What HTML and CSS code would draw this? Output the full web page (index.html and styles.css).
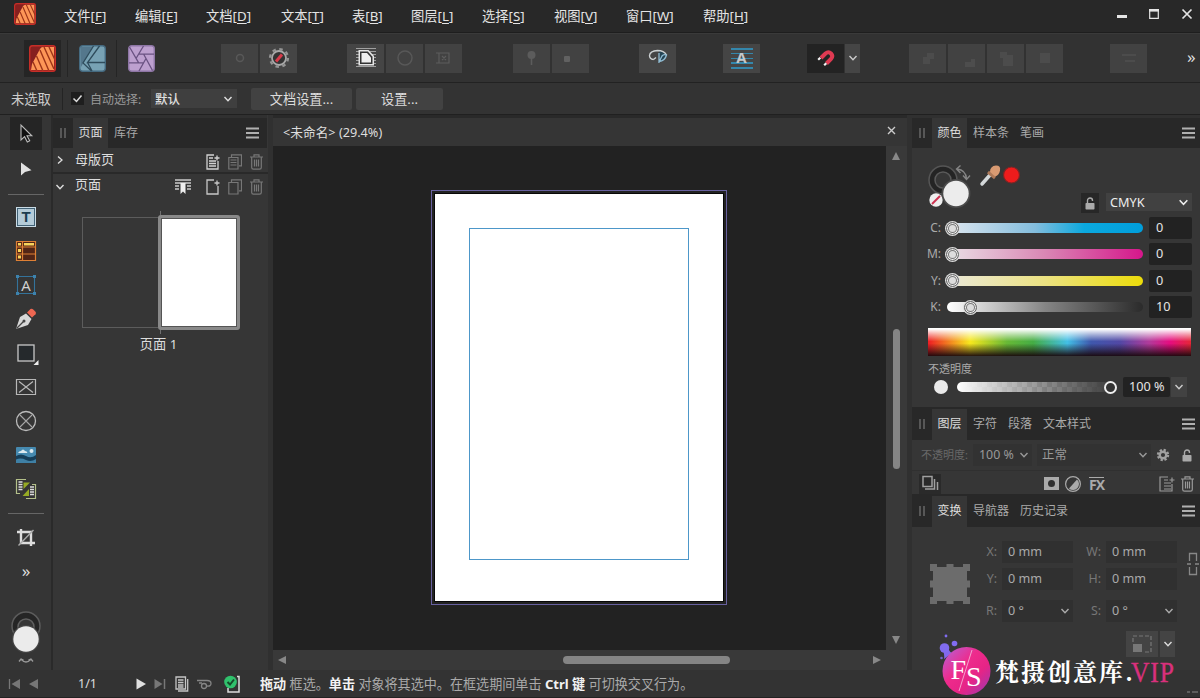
FILE: index.html
```html
<!DOCTYPE html>
<html lang="zh-CN">
<head>
    <meta charset="UTF-8">
    <title>未命名</title>
    <link rel="stylesheet" href="styles.css">
</head>
<body>

<svg class="defs">
    <symbol id="chev" viewBox="0 0 10 8"><path d="M1.5 2 5 5.7 8.5 2" fill="none" stroke="currentColor" stroke-width="1.4"/></symbol>
    <symbol id="menu" viewBox="0 0 13 12"><path d="M0 1.5h13M0 6h13M0 10.5h13" stroke="#b0b0b0" stroke-width="2"/></symbol>
    <symbol id="grip" viewBox="0 0 6 10"><path d="M1 0v10M5 0v10" stroke="#777" stroke-width="1.2"/></symbol>
    <symbol id="trash" viewBox="0 0 13 16"><path d="M0 3h13M4 3V.8h5V3M1.700 3v10.500q0 1.700 1.700 1.700h6.200q1.700 0 1.700-1.700V3M4.500 5.500v7M6.500 5.500v7M8.500 5.500v7" fill="none" stroke="currentColor" stroke-width="1.2"/></symbol>
    <symbol id="lock" viewBox="0 0 10 13"><path d="M2.500 6V3.500a2.500 2.500 0 0 1 5 0V4" fill="none" stroke="currentColor" stroke-width="1.400"/><rect x=".5" y="6" width="9" height="6.500" rx=".7" fill="currentColor"/></symbol>
    <symbol id="pub" viewBox="0 0 27 27">
        <rect width="27" height="27" rx="3" fill="#86201f"/>
        <path d="M2 25 3 19 11 4Q12 2 14 2h11v23z" fill="#fd9657"/>
        <path d="M4 17l4 9M7.500 11l6.500 15M11 5l9 21M15 2l10 22M20 2l6 13" stroke="#9c3418" stroke-width="1.400"/>
        <rect x=".7" y=".7" width="25.600" height="25.600" rx="3" fill="none" stroke="#c52e28" stroke-width="1.400"/>
    </symbol>
</svg>

<header class="titlebar">
    <svg class="app-icon" width="22" height="22"><use href="#pub"/></svg>
    <nav class="menus">
        <span>文件[<u>F</u>]</span>
        <span>编辑[<u>E</u>]</span>
        <span>文档[<u>D</u>]</span>
        <span>文本[<u>T</u>]</span>
        <span>表[<u>B</u>]</span>
        <span>图层[<u>L</u>]</span>
        <span>选择[<u>S</u>]</span>
        <span>视图[<u>V</u>]</span>
        <span>窗口[<u>W</u>]</span>
        <span>帮助[<u>H</u>]</span>
    </nav>
    <svg class="win-buttons" width="77" height="14" viewBox="0 0 77 14">
        <path d="M1 8.500h10" stroke="#e4e4e4" stroke-width="3"/>
        <path d="M33.700 2v8.300h8.600V2" fill="none" stroke="#e4e4e4" stroke-width="1.200"/>
        <path d="M33 2.300h10" stroke="#e4e4e4" stroke-width="2.600"/>
        <path d="M66.500 1.500l9 9M75.500 1.500l-9 9" stroke="#e4e4e4" stroke-width="1.700"/>
    </svg>
</header>

<div class="toolbar">
    <div class="personas">
        <div class="persona active"><svg width="27" height="27"><use href="#pub"/></svg></div>
        <div class="persona">
            <svg width="27" height="27" viewBox="0 0 27 27">
                <rect x=".7" y=".7" width="25.600" height="25.600" rx="3" fill="#78a2b4" stroke="#456a80" stroke-width="1.400"/>
                <path d="M1.500 2h12L2 22z" fill="#54778c"/>
                <path d="M14.500 1 4 18l8.500 8M20.500 1 8.500 17.500H26M8.500 17.500l4.500 8.500" fill="none" stroke="#2f4c5c" stroke-width="1.300"/>
            </svg>
        </div>
        <div class="persona">
            <svg width="27" height="27" viewBox="0 0 27 27">
                <rect x=".7" y=".7" width="25.600" height="25.600" rx="3" fill="#bda0cf" stroke="#8e76a5" stroke-width="1.400"/>
                <path d="M15.700 9.200 24.500 25.500M18 13.500 11 26M15.700 17.800H1M10.700 17.800 1.500 2M8 13.500 15.500 1M10.700 9.200H26" fill="none" stroke="#6a5282" stroke-width="1.300"/>
            </svg>
        </div>
    </div>

    <div class="group g-prefs">
        <div class="btn dim"><svg width="22" height="22" viewBox="0 0 22 22"><circle cx="11" cy="11" r="3.500" fill="none" stroke="#585858" stroke-width="1.500"/></svg></div>
        <div class="btn"><svg width="22" height="22" viewBox="0 0 22 22"><circle cx="11" cy="11" r="9" fill="none" stroke="#949494" stroke-width="2.200" stroke-dasharray="3.500 3.568"/><circle cx="11" cy="11" r="7" fill="#333" stroke="#a8a8a8" stroke-width="1.800"/><path d="M8 14.500l6-7" stroke="#d83a4a" stroke-width="3"/></svg></div>
    </div>

    <div class="group g-wrap">
        <div class="btn"><svg width="22" height="22" viewBox="0 0 22 22"><path d="M1 1.500h20M1 4.500h20M1 7.500h20M1 10.500h20M1 13.500h20M1 16.500h20M1 19.500h20" stroke="#a0a0a0"/><path d="M3.500 3h10l5.500 6v9.500H3.500z" fill="#e6e6e6"/><path d="M5 4.500h7.800l4.700 5.300V17H5z" fill="#333"/><path d="M6.500 6h5.500l4 4.500v5H6.500z" fill="#eee"/></svg></div>
        <div class="btn dim"><svg width="22" height="22" viewBox="0 0 22 22"><circle cx="11" cy="11" r="7" fill="none" stroke="#585858" stroke-width="1.500"/></svg></div>
        <div class="btn dim"><svg width="22" height="22" viewBox="0 0 22 22"><path d="M6 6h10v10H6zM3 6h3M3 16h3M9 9l4 4M13 9l-4 4" fill="none" stroke="#5c5c5c" stroke-width="1.200"/></svg></div>
    </div>

    <div class="group g-pin">
        <div class="btn dim"><svg width="22" height="22" viewBox="0 0 22 22"><circle cx="10.500" cy="8" r="4" fill="#5c5c5c"/><path d="M10.500 11v7" stroke="#5c5c5c" stroke-width="1.600"/></svg></div>
        <div class="btn dim"><svg width="22" height="22" viewBox="0 0 22 22"><rect x="4" y="9" width="6" height="6" rx="1" fill="#616161"/></svg></div>
    </div>

    <div class="group g-view">
        <div class="btn"><svg width="22" height="22" viewBox="0 0 22 22"><path d="M12 4q5.500 0 7 4-1 4-5.500 6.500z" fill="#244454"/><path d="M6.500 12.500Q2.500 12 2.500 8.500 3 4 10.500 3.500 17 3.500 19.500 8M6.500 12.500l2.500-2" fill="none" stroke="#cbd0d2" stroke-width="1.400"/><path d="M12 6v10M12 14.500q6-.5 7.500-6.500-3-1-4.500 1l-2.500 5" fill="none" stroke="#91bdd4" stroke-width="1.300"/></svg></div>
    </div>

    <div class="group g-baseline">
        <div class="btn">
            <div class="baseline-icon">A</div>
        </div>
    </div>

    <div class="group g-snap">
        <div class="btn on"><svg width="22" height="22" viewBox="0 0 22 22"><path d="M6 11l4.500-4.500q3-2.500 5.500 0t0 5.500L11.500 16.500" fill="none" stroke="#df3a52" stroke-width="4"/><path d="M5 12.500l-1.500-1.500M11 18l-1.500-1.500" stroke="#f2f2f2" stroke-width="3"/></svg></div>
        <div class="btn drop"><svg width="10" height="8"><use href="#chev"/></svg></div>
    </div>

    <div class="group g-bool">
        <div class="btn dim"><svg width="22" height="22" viewBox="0 0 22 22"><path d="M6 10h4V6h7v6h-4v5H6z" fill="#4c4c4c"/></svg></div>
        <div class="btn dim"><svg width="22" height="22" viewBox="0 0 22 22"><path d="M19 12v8H9v-5h6v-3z" fill="#4d4d4d"/></svg></div>
        <div class="btn dim"><svg width="22" height="22" viewBox="0 0 22 22"><path d="M5 5h7v3h6v11H8v-8H5z" fill="#4c4c4c"/></svg></div>
        <div class="btn dim"><svg width="22" height="22" viewBox="0 0 22 22"><path d="M6 6h10v10H6z" fill="#4c4c4c"/></svg></div>
    </div>

    <div class="group g-align">
        <div class="btn dim"><svg width="22" height="22" viewBox="0 0 22 22"><path d="M4 8h14M7 14h10" stroke="#4c4c4c" stroke-width="2"/></svg></div>
    </div>
    <span class="more">»</span>
</div>

<div class="contextbar">
    <span class="no-selection">未选取</span>
    <svg class="check" width="13" height="13" viewBox="0 0 13 13"><path d="M2.500 6.500l3 3 5-6" fill="none" stroke="#ddd" stroke-width="1.500"/></svg>
    <span class="auto-label">自动选择:</span>
    <div class="auto-select"><b>默认</b><svg width="10" height="8"><use href="#chev"/></svg></div>
    <div class="ctx-btn doc-setup">文档设置...</div>
    <div class="ctx-btn prefs">设置...</div>
</div>

<main class="workspace">
    <aside class="tools">
        <div class="tool selected"><svg width="22" height="22" viewBox="0 0 22 22"><path d="M6 2v15l3.600-3.300L12.300 19l2.400-1.200L12 12.800h4.800z" fill="#111" stroke="#bbb" stroke-width="1.100"/></svg></div>
        <div class="tool"><svg width="22" height="22" viewBox="0 0 22 22"><path d="M6 3.500v13l4-3.500 6.500-1.800z" fill="#e2e2e2"/></svg></div>
        <hr>
        <div class="tool"><div class="frame-text">T</div></div>
        <div class="tool"><svg width="22" height="22" viewBox="0 0 22 22"><path d="M1.500 1.500h19v19h-19zM7.500 1v20M1 7h20M1 14h20" fill="#512516" stroke="#de8035" stroke-width="1.200"/><path d="M3 3h3v2.500H3zM9 3h10v2.500H9zM3 9h3v3H3zM3 15.500h3v3H3z" fill="#f7d45c"/></svg></div>
        <div class="tool"><svg width="22" height="22" viewBox="0 0 22 22"><path d="M2.500 2.500h17v17h-17z" fill="none" stroke="#34739b" stroke-width="1.100"/><path d="M1 1h3v3H1zM18 1h3v3h-3zM1 18h3v3H1zM18 18h3v3h-3z" fill="#3d83ae"/><text class="art-a" x="11" y="16.500">A</text></svg></div>
        <div class="tool"><svg width="22" height="22" viewBox="0 0 22 22"><path d="M1 21 5 9l6-3.500 5.500 5.500L13 17z" fill="#d8d8d8"/><path d="M1.500 20.500l7-7" stroke="#444" stroke-width="1.200"/><circle cx="9" cy="13" r="1.500" fill="#444"/><path d="M12 4.500 15.500 1q1.500-.8 3 .7l2 2q1 1.200 0 2.500L17 9.500z" fill="#ee6752"/></svg></div>
        <div class="tool"><svg width="26" height="26" viewBox="0 0 26 26"><rect x="5" y="5" width="16" height="16" fill="#25292c" stroke="#c8c8c8" stroke-width="1.300"/><path d="M25.500 20v5h-5z" fill="#eee"/></svg></div>
        <div class="tool"><svg width="22" height="22" viewBox="0 0 22 22"><path d="M1.500 3.500h19v15h-19zM4 5.500l14 11M18 5.500l-14 11" fill="none" stroke="#b8b8b8" stroke-width="1.200"/></svg></div>
        <div class="tool"><svg width="22" height="22" viewBox="0 0 22 22"><circle cx="11" cy="11" r="9.500" fill="none" stroke="#bbb" stroke-width="1.300"/><path d="M5 5l12 12M17 5 5 17" stroke="#a5a5a5" stroke-width="1.100"/></svg></div>
        <div class="tool"><svg width="22" height="22" viewBox="0 0 22 22"><rect x="1" y="3" width="20" height="16" rx="1" fill="#468ab0"/><path d="M1 12q5-3 10 0t10-1v8H1z" fill="#163e59"/><path d="M1 15.500q5-2 10 .5t10-1v4H1z" fill="#3f80a5"/><path d="M3 9q1-2 3-2 2-3 4 0 2 0 2.500 2z" fill="#dce9ef"/><circle cx="16.500" cy="7" r="2" fill="#dce9ef"/></svg></div>
        <div class="tool"><svg width="22" height="22" viewBox="0 0 22 22"><path d="M11 1.500H1.500v14H5M11 20.500h9.500v-14H17" fill="none" stroke="#b4c08a" stroke-width="1.200"/><path d="M3.500 4h4M3.500 6.500h4M3.500 9h4M3.500 11.500h4M15 9h4M15 11.500h4M15 14h4M15 16.500h4" stroke="#ddd" stroke-width="1.300"/><path d="M8.500 4.500H15L8.500 11zM14 18H7.500L14 11z" fill="#96aa24"/></svg></div>
        <hr>
        <div class="tool crop"><svg width="22" height="22" viewBox="0 0 22 22"><path d="M6 2v14h14M2 5h14v14" fill="none" stroke="#ddd" stroke-width="2.400"/><path d="M3.500 18.500 18.500 3" stroke="#aaa" stroke-width="1.400"/></svg></div>
        <div class="tool more-tools">»</div>
        <svg class="wells" width="34" height="56" viewBox="0 0 34 56">
            <circle cx="17" cy="16" r="14" fill="#252525" stroke="#5c5c5c" stroke-width="1.500"/>
            <circle cx="17" cy="17" r="8" fill="#363636" stroke="#606060" stroke-width="1.500"/>
            <circle cx="17" cy="29" r="14" fill="#444"/>
            <circle cx="17" cy="29" r="12.700" fill="#ebebeb"/>
            <path d="M12 49q5 6 10 0M10 51.500l2-2.500 2.500 1M19.500 50l2.500-1 2 2.500" fill="none" stroke="#999" stroke-width="1.300"/>
        </svg>
    </aside>

    <section class="pages-panel">
        <div class="tabs">
            <svg class="grip" width="6" height="10"><use href="#grip"/></svg>
            <span class="tab active">页面</span>
            <span class="tab">库存</span>
            <svg class="burger" width="13" height="12"><use href="#menu"/></svg>
        </div>
        <div class="page-row masters">
            <svg class="arrow" width="8" height="10" viewBox="0 0 8 10"><path d="M2 1.500 6 5 2 8.500" fill="none" stroke="#ddd" stroke-width="1.300"/></svg>
            <span>母版页</span>
            <div class="row-icons">
                <svg width="14" height="16" viewBox="0 0 14 16"><path d="M8 1H1v14h11V7M3 4h4M3 7h7M3 9.500h7M3 12h7M8.500 4h5M11 1.500v5" fill="none" stroke="#d2d2d2" stroke-width="1.300"/></svg>
                <svg class="off" width="14" height="16" viewBox="0 0 14 16"><path d="M3.500 3V.8h10v11H11M.8 3.500H10V15H.8zM2.500 6h6M2.500 8.500h6M2.500 11h6" fill="none" stroke="currentColor" stroke-width="1.200"/></svg>
                <svg class="off" width="13" height="16"><use href="#trash"/></svg>
            </div>
        </div>
        <div class="page-row pages">
            <svg class="arrow" width="10" height="8"><use href="#chev"/></svg>
            <span>页面</span>
            <svg class="section-icon" width="16" height="15" viewBox="0 0 16 15"><path d="M0 1h16M0 4h16M0 7h4M12 7h4M0 10h4M12 10h4" stroke="#ccc" stroke-width="1.400"/><path d="M5.500 4h5v11L8 12.500 5.500 15z" fill="#eee"/></svg>
            <div class="row-icons">
                <svg width="14" height="16" viewBox="0 0 14 16"><path d="M8 1H1v14h11V7M8.500 4h5M11 1.500v5" fill="none" stroke="#c8c8c8" stroke-width="1.300"/></svg>
                <svg class="off" width="14" height="16" viewBox="0 0 14 16"><path d="M3.500 3V.8h10v11H11M.8 3.500H10V15H.8z" fill="none" stroke="currentColor" stroke-width="1.200"/></svg>
                <svg class="off" width="13" height="16"><use href="#trash"/></svg>
            </div>
        </div>
        <div class="spread">
            <div class="page-empty"></div>
            <div class="page-thumb"></div>
        </div>
        <div class="page-label">页面 1</div>
    </section>

    <section class="document">
        <div class="doc-tab">
            <span>&lt;未命名&gt; (29.4%)</span>
            <svg width="9" height="9" viewBox="0 0 9 9"><path d="M1 1l7 7M8 1 1 8" stroke="#ccc" stroke-width="1.400"/></svg>
        </div>
        <div class="canvas">
            <div class="bleed"><div class="page"><div class="margins"></div></div></div>
        </div>
        <div class="vscroll">
            <svg width="10" height="8" viewBox="0 0 10 8"><path d="M5 0l4 8H1z" fill="#888"/></svg>
            <div class="thumb"></div>
            <svg width="10" height="8" viewBox="0 0 10 8"><path d="M5 8l4-8H1z" fill="#888"/></svg>
        </div>
        <div class="hscroll">
            <svg width="8" height="8" viewBox="0 0 8 8"><path d="M0 4l8-4v8z" fill="#888"/></svg>
            <div class="thumb"></div>
            <svg width="8" height="8" viewBox="0 0 8 8"><path d="M8 4 0 0v8z" fill="#888"/></svg>
        </div>
    </section>

    <aside class="studio">
        <div class="tabs">
            <svg class="grip" width="6" height="10"><use href="#grip"/></svg>
            <span class="tab active">颜色</span>
            <span class="tab">样本条</span>
            <span class="tab">笔画</span>
            <svg class="burger" width="13" height="12"><use href="#menu"/></svg>
        </div>
        <div class="color-panel">
            <div class="color-top">
                <svg width="94" height="52" viewBox="1 -1 94 52">
                    <circle cx="16" cy="20" r="11" fill="none" stroke="#242424" stroke-width="6"/>
                    <circle cx="16" cy="20" r="14" fill="none" stroke="#555" stroke-width="1.500"/>
                    <circle cx="16" cy="20" r="8" fill="#363636" stroke="#5a5a5a" stroke-width="1.500"/>
                    <path d="M30 9q9 1 9.500 10M33.500 5.500 29.500 9l4 4M36 15.500l3.500 4 3.500-4" fill="none" stroke="#858585" stroke-width="1.400"/>
                    <circle cx="29" cy="33.500" r="14.500" fill="#4b4b4b"/>
                    <circle cx="29" cy="33.500" r="12.700" fill="#ececec"/>
                    <circle cx="9" cy="40" r="6.700" fill="#eee"/><path d="M5 44l8-8" stroke="#cc3150" stroke-width="2"/>
                    <path d="M55 24l8-9" stroke="#d4d8da" stroke-width="3.500" stroke-linecap="round"/>
                    <path d="M61 12l7 6" stroke="#ac7858" stroke-width="3"/>
                    <path d="M63 12q0-6 6-6.500 5 0 4 5-1 5-5 6z" fill="#d89a72"/>
                    <circle cx="84.500" cy="15" r="8" fill="#ed1c1c" stroke="#7c2525" stroke-width="1.200"/>
                </svg>
                <div class="lock-btn"><svg width="10" height="13"><use href="#lock"/></svg></div>
                <div class="mode">CMYK<svg width="11" height="9"><use href="#chev"/></svg></div>
            </div>
            <div class="sliders">
                <label>C:</label><div class="track cyan"><i></i></div><div class="value">0</div>
                <label>M:</label><div class="track magenta"><i></i></div><div class="value">0</div>
                <label>Y:</label><div class="track yellow"><i></i></div><div class="value">0</div>
                <label>K:</label><div class="track black"><i></i></div><div class="value">10</div>
            </div>
            <div class="spectrum"></div>
            <div class="opacity-label">不透明度</div>
            <div class="opacity">
                <div class="dot"></div>
                <div class="track alpha"><i></i></div>
                <div class="value">100 %</div>
                <div class="drop"><svg width="10" height="8"><use href="#chev"/></svg></div>
            </div>
        </div>

        <div class="tabs flush">
            <svg class="grip" width="6" height="10"><use href="#grip"/></svg>
            <span class="tab active">图层</span>
            <span class="tab">字符</span>
            <span class="tab">段落</span>
            <span class="tab">文本样式</span>
            <svg class="burger" width="13" height="12"><use href="#menu"/></svg>
        </div>
        <div class="layer-opts">
            <span class="lbl">不透明度:</span>
            <div class="sel">100 %<svg width="10" height="8"><use href="#chev"/></svg></div>
            <div class="sel">正常<svg width="10" height="8"><use href="#chev"/></svg></div>
            <svg class="gear" width="14" height="14" viewBox="0 0 14 14"><circle cx="7" cy="7" r="3.300" fill="none" stroke="#a0a0a0" stroke-width="2.400"/><circle cx="7" cy="7" r="5" fill="none" stroke="#a0a0a0" stroke-width="2.400" stroke-dasharray="2.200 1.727"/></svg>
            <svg class="lk" width="10" height="13"><use href="#lock"/></svg>
        </div>
        <div class="layer-icons">
            <div class="stack"><svg width="18" height="16" viewBox="0 0 18 16"><path d="M2 1.500h9v10H2zM4 14h9.500V4M16.500 7v8" fill="none" stroke="#a0a0a0" stroke-width="1.500"/></svg></div>
            <svg width="15" height="13" viewBox="0 0 15 13"><rect width="15" height="13" fill="#aaa"/><circle cx="7.500" cy="6.500" r="3.500" fill="#303030"/></svg>
            <svg width="16" height="16" viewBox="0 0 16 16"><circle cx="8" cy="8" r="7.400" fill="none" stroke="#aaa" stroke-width="1.200"/><path d="M12 3.500a6 6 0 0 1-8 9z" fill="#aaa"/></svg>
            <span class="fx">FX</span>
            <svg width="16" height="16" viewBox="0 0 16 16"><path d="M9 1H1v14h3M5 4h4M5 7h7M5 10h7M5 13h7M10.500 4h5M13 1.500v5M13 8v7H4" fill="none" stroke="#999" stroke-width="1.200"/></svg>
            <svg class="bin" width="13" height="16"><use href="#trash"/></svg>
        </div>

        <div class="tabs flush">
            <svg class="grip" width="6" height="10"><use href="#grip"/></svg>
            <span class="tab active">变换</span>
            <span class="tab">导航器</span>
            <span class="tab">历史记录</span>
            <svg class="burger" width="13" height="12"><use href="#menu"/></svg>
        </div>
        <div class="transform">
            <svg class="anchor" width="40" height="40" viewBox="0 0 40 40"><path d="M3 3h34v34H3zM0 0h7v7H0zM16.500 0h7v7h-7zM33 0h7v7h-7zM0 16.500h7v7H0zM33 16.500h7v7h-7zM0 33h7v7H0zM16.500 33h7v7h-7zM33 33h7v7h-7z" fill="#6c6c6c"/></svg>
            <div class="fields">
                <label>X:</label><div class="field">0 mm</div><label>W:</label><div class="field">0 mm</div>
                <label>Y:</label><div class="field">0 mm</div><label>H:</label><div class="field">0 mm</div>
                <label>R:</label><div class="field">0 °<svg width="10" height="8"><use href="#chev"/></svg></div><label>S:</label><div class="field">0 °<svg width="10" height="8"><use href="#chev"/></svg></div>
            </div>
            <svg class="link" width="12" height="24" viewBox="0 0 12 24"><path d="M2.500 9V1.500h7V9M2.500 15v7.500h7V15M0 12h4M8 12h4" fill="none" stroke="#888" stroke-width="1.300"/></svg>
            <div class="scale">
                <div class="scale-btn"><svg width="20" height="18" viewBox="0 0 20 18"><path d="M1 7V1h18v16h-7" fill="none" stroke="#777" stroke-width="1.200" stroke-dasharray="4 2"/><rect x="1" y="9" width="9" height="8" fill="#777"/></svg></div>
                <div class="scale-drop"><svg width="10" height="8"><use href="#chev"/></svg></div>
            </div>
        </div>
    </aside>
</main>

<footer class="statusbar">
    <svg class="nav-prev" width="32" height="12" viewBox="0 0 32 12"><path d="M1.500 1v10" stroke="#777" stroke-width="1.300"/><path d="M12 1v10L3.500 6zM30 1v10L21 6z" fill="#777"/></svg>
    <span class="page-no">1/1</span>
    <svg class="nav-next" width="30" height="12" viewBox="0 0 30 12"><path d="M.5.500v11L10 6z" fill="#e0e0e0"/><path d="M18.500 1v10l8-5z" fill="#777"/><path d="M28.500 1v10" stroke="#777" stroke-width="1.500"/></svg>
    <svg class="spread-icon" width="14" height="16" viewBox="0 0 14 16"><path d="M1 1h9.500v12H1zM3 15h9.700V3M3 4h5.500M3 6.500h5.500M3 9h5.500M3 11h5.500" fill="none" stroke="#c5c5c5" stroke-width="1.300"/></svg>
    <svg class="chain-icon" width="15" height="12" viewBox="0 0 15 12"><path d="M0 2.500h10q4 0 4 3t-4 2.500M5 5H2" fill="none" stroke="#858585" stroke-width="1.300"/><circle cx="7" cy="8" r="2.500" fill="none" stroke="#858585" stroke-width="1.300"/></svg>
    <svg class="preflight" width="16" height="18" viewBox="0 0 16 18"><path d="M4 13v4h11V1.500h-2" fill="none" stroke="#ddd" stroke-width="1.500"/><circle cx="6.500" cy="7" r="6.300" fill="#30c16c"/><path d="M3.500 7l2.500 2.500L10 4.500" fill="none" stroke="#164a2b" stroke-width="2"/></svg>
    <p class="hint"><b>拖动</b> 框选。<b>单击</b> 对象将其选中。在框选期间单击 <b>Ctrl 键</b> 可切换交叉行为。</p>
    <svg class="resize" width="12" height="4" viewBox="0 0 12 4"><path d="M1 2h3M6 2h6" stroke="#888" stroke-width="1.200"/></svg>
</footer>

<div class="watermark">
    <svg width="52" height="62" viewBox="0 0 52 62">
        <defs><linearGradient id="wm" x1="0" y1="0" x2="1" y2="1"><stop offset="0" stop-color="#b265dc"/><stop offset=".4" stop-color="#ee2b8c"/><stop offset=".65" stop-color="#e62486"/><stop offset="1" stop-color="#963bb4"/></linearGradient></defs>
        <path d="M3 13q3 8 2 12l8-6q-4-2-3-6z" fill="#8368ee"/>
        <circle cx="27.500" cy="37" r="24" fill="url(#wm)"/>
        <circle cx="5.500" cy="14" r="4.800" fill="#816cf0"/><circle cx="15.500" cy="9.500" r="2.800" fill="#816cf0"/><circle cx="7" cy="2" r="1.400" fill="#816cf0"/><circle cx="2.500" cy="24" r="1.300" fill="#7165c8"/>
        <path d="M33 16 20 57" stroke="#f6bcdc" stroke-width=".8"/>
        <text class="wm-mono" x="11.500" y="45">F</text><text class="wm-mono" x="27" y="52">S</text>
    </svg>
    <span class="wm-name">梵摄创意库.</span><span class="wm-vip">VIP</span>
</div>

</body>
</html>
```
FILE: styles.css
```css
* { box-sizing: border-box; }
body { margin: 0; width: 1200px; height: 698px; overflow: hidden; display: flex; flex-direction: column; background: #333; color: #ccc; font: 12px/16px "Noto Sans", "Noto Sans CJK SC", sans-serif; white-space: nowrap; }
svg { display: block; flex: none; }
.defs { width: 0; height: 0; position: absolute; }

/* title bar */
.titlebar { height: 33px; flex: none; display: flex; background: #282828; border-bottom: 1px solid #1e1e1e; color: #e4e4e4; }
.app-icon { margin: 3px 28px 0 14px; }
.menus { display: grid; grid-template-columns: 71px 71px 75px 71px 59px 71px 72px 72px 77px 1fr; flex: 1; font-size: 13.300px; line-height: 33px; }
.menus u { text-underline-offset: 2px; }
.win-buttons { margin: 8px 7px 0 0; }

/* toolbar */
.toolbar { height: 50px; flex: none; display: flex; align-items: center; background: #323232; border-top: 1px solid #3a3a3a; border-bottom: 1px solid #222; }
.personas { display: flex; width: 221px; padding-left: 24px; }
.persona { width: 49px; height: 37px; display: flex; align-items: center; justify-content: center; border-left: 1px solid #252525; }
.persona.active { width: 37px; margin-right: 6px; background: #252525; border: 0; }
.group { display: flex; gap: 2px; }
.btn { width: 37px; height: 29px; background: #454545; display: flex; align-items: center; justify-content: center; }
.btn.dim { background: #424242; }
.btn.on { background: #232323; }
.btn.drop { width: 15px; }
.g-wrap { margin-left: 50px; }
.g-pin { margin-left: 51px; }
.g-view { margin-left: 50px; }
.g-baseline { margin-left: 47px; }
.g-snap { margin-left: 47px; gap: 1px; }
.g-bool { margin-left: 49px; }
.g-align { margin-left: 47px; }
.baseline-icon { width: 22px; height: 21px; background: repeating-linear-gradient(#3487ac 0 1.500px, transparent 1.500px 4.800px); color: #c3c7ca; font: bold 15px/19px "Open Sans", sans-serif; text-align: center; }
.more { margin-left: 40px; padding-bottom: 3px; font-size: 17px; color: #ddd; }

/* context bar */
.contextbar { height: 32px; flex: none; display: flex; align-items: center; padding-left: 11px; border-bottom: 1px solid #202020; }
.no-selection { width: 52px; height: 22px; line-height: 22px; font-size: 13.300px; border-right: 1px solid #242424; }
.check { margin: 0 6px 0 8px; background: #1e1e1e; }
.auto-label { width: 61px; line-height: 18px; padding-top: 2px; color: #999; }
.auto-select { width: 86px; height: 19px; padding: 0 4px; display: flex; align-items: center; justify-content: space-between; background: #3f3f3f; color: #e0e0e0; }
.auto-select b { padding-top: 2px; font-weight: 500; font-size: 12.500px; }
.ctx-btn { height: 22px; background: #424242; border-radius: 2px; text-align: center; line-height: 22px; font-size: 13.200px; color: #ddd; }
.doc-setup { width: 101px; margin: 0 4px 0 14px; }
.prefs { width: 87px; }

.workspace { height: 555px; flex: none; display: flex; }

/* tools */
.tools { width: 53px; background: #353535; border-right: 2px solid #2a2a2a; display: flex; flex-direction: column; align-items: center; padding: 2px 0 0 1px; }
.tool { width: 32px; height: 34px; display: flex; align-items: center; justify-content: center; flex: none; }
.tool.selected { height: 33px; margin-bottom: 3px; background: #252525; }
.tools hr { width: 36px; height: 1px; margin: 7px 0 5px; border: 0; background: #666; flex: none; }
.tool.crop { margin-top: 2px; }
.frame-text { width: 20px; height: 20px; border: 1px solid #c9dbe5; background: #b4cbd8; box-shadow: inset 0 0 0 1px #426276; color: #1c3d50; font: bold 15px/18px "Liberation Sans", sans-serif; text-align: center; }
.art-a { fill: #d2d2d2; font: 15px "Open Sans", sans-serif; text-anchor: middle; }
.more-tools { height: 32px; font-size: 17px; color: #ddd; }
.wells { margin-top: 23px; }

/* tab strips shared by the panels */
.tabs { height: 33px; display: flex; align-items: center; background: #282828; border-top: 3px solid #303030; color: #aaa; flex: none; }
.tabs.flush { border-top: 0; }
.grip { margin: 0 7px; }
.tab { margin-right: 11px; }
.tab.active { height: 100%; width: 35px; margin-right: 6px; background: #363636; color: #ddd; text-align: center; line-height: 29px; }
.flush .tab.active { height: 31px; margin-top: 2px; line-height: 30px; }
.flush .tab { line-height: 17px; }
.burger { margin-left: auto; margin-right: 5px; }

/* pages */
.pages-panel { width: 220px; background: #363636; border-right: 5px solid #303030; color: #ddd; }
.pages-panel .tabs { margin-right: 1px; }
.pages-panel .burger { margin-right: 8px; }
.page-row { display: flex; align-items: center; height: 25px; padding: 0 5px 0 2px; font-size: 13px; }
.page-row.masters { height: 26px; border-bottom: 2px solid #292929; }
.arrow { width: 10px; margin-right: 10px; }
.page-row span { line-height: 18px; padding-bottom: 2px; }
.row-icons { display: flex; gap: 8px; margin-left: auto; padding-top: 3px; }
.masters .row-icons { padding-top: 4px; }
.pages span { padding-bottom: 5px; }
.pages .row-icons { padding-top: 1px; }
.section-icon { margin: 0 0 0 74px; }
.off { color: #777; }
.spread { display: flex; align-items: center; margin: 12px 0 0 29px; padding: 4px 0; background: linear-gradient(#707070, #707070) 78px 0 / 1px 100% no-repeat; }
.page-empty { width: 76px; height: 111px; border: 1px solid #5c5c5c; border-right: 0; }
.page-thumb { width: 82px; height: 115px; background: #fff; border: 3px solid #898989; border-radius: 3px; box-shadow: inset 0 0 0 1px #555; }
.page-label { width: 211px; margin-top: 2px; text-align: center; font-size: 13.300px; }

/* document */
.document { width: 634px; display: grid; grid-template: 31px 504px 20px / 613px 21px; background: #393939; }
.doc-tab { grid-column: 1 / 3; border-top: 3px solid #292929; background: #353535; display: flex; align-items: center; justify-content: space-between; padding: 0 11px 0 10px; font-size: 12.700px; color: #ddd; }
.doc-tab svg { margin-bottom: 3px; }
.canvas { background: #222; padding: 44px 0 0 158px; }
.bleed { width: 296px; height: 415px; border: 1px solid #67609f; padding: 3px; }
.page { width: 288px; height: 407px; background: #fff; box-shadow: 0 0 0 1px #080808; padding: 34px; }
.margins { width: 220px; height: 332px; border: 1px solid #4d97c9; }
.thumb { background: #858585; border-radius: 4px; }
.vscroll { display: flex; flex-direction: column; align-items: center; padding: 6px 1px 0 0; }
.vscroll .thumb { width: 7px; height: 140px; margin: 169px 0 167px; flex: none; }
.hscroll { display: flex; align-items: center; padding-left: 5px; }
.hscroll .thumb { width: 167px; height: 8px; margin: 0 143px 0 277px; }

/* studio */
.studio { width: 293px; border-left: 5px solid #303030; background: #363636; flex: none; }
.color-panel { height: 259px; padding: 11px 8px 0 16px; }
.color-top { display: flex; height: 56px; }
.lock-btn { width: 18px; height: 20px; margin: 34px 7px 0 59px; background: #272727; display: flex; align-items: center; justify-content: center; color: #aaa; }
.mode { width: 86px; height: 18px; margin-top: 34px; padding: 0 3px 0 4px; display: flex; align-items: center; justify-content: space-between; background: #414141; color: #eee; font-size: 12.700px; }
.sliders { display: grid; grid-template-columns: 13px 196px 43px; column-gap: 6px; grid-auto-rows: 26.300px; align-items: center; }
.sliders label { color: #aaa; justify-self: end; }
.value { height: 22px; padding-left: 7px; line-height: 21px; background: #222; color: #e5e5e5; font-size: 12.700px; border-radius: 2px; }
.track { height: 10px; border-radius: 5px; position: relative; }
.track i { position: absolute; left: -1px; top: -1.500px; width: 13px; height: 13px; border: 1px solid #666; border-radius: 50%; background: #ddd; box-shadow: inset 0 0 0 1px #f0f0f0, inset 0 0 0 2px #777, 0 0 0 1px #ddd; }
.cyan { background: linear-gradient(90deg, #dfe7f0, #83bddd 45%, #0ba9df 70%, #009edb); }
.magenta { background: linear-gradient(90deg, #eadfe6, #d987b4 50%, #d6168b); }
.yellow { background: linear-gradient(90deg, #ebe9da, #ece282 50%, #ecdc0a); }
.black { background: linear-gradient(90deg, #fff, #858585 50%, #2b2b2b); }
.black i { left: 17px; }
.spectrum { height: 28px; margin: 8px 1px 0 0; background: linear-gradient(#fff 4%, rgba(255,255,255,.5) 25%, rgba(255,255,255,0) 48%, rgba(0,0,0,0) 55%, rgba(25,8,12,.95) 100%), linear-gradient(90deg, #ee1c24, #f7e81e 16%, #68b936 30%, #45ad45 40%, #43bfe6 53%, #3f58ad 62%, #5248a5 73%, #b13b9b 84%, #e60d80 92%, #e52736); }
.opacity-label { margin-top: 5px; font-size: 11px; color: #aaa; }
.opacity { display: flex; align-items: center; }
.dot { width: 14px; height: 14px; margin: 0 9px 0 6px; background: #eaeaea; border-radius: 50%; }
.alpha { width: 158px; margin-right: 8px; background: linear-gradient(90deg, #fff, rgba(140,140,140,.7) 55%, #3a3a3a), repeating-conic-gradient(#999 0 25%, #666 0 50%) 0 0 / 10px 10px; }
.alpha i { left: 147px; border: 2px solid #eee; background: #333; box-shadow: none; }
.opacity .value { width: 47px; height: 20px; padding-left: 6px; line-height: 19px; }
.opacity .drop { width: 16px; height: 20px; margin-left: 1px; display: flex; align-items: center; justify-content: center; background: #424242; }
.layer-opts { height: 31px; display: flex; align-items: center; padding: 0 0 0 9px; border-bottom: 1px solid #303030; color: #999; }
.lbl { width: 52px; color: #686868; font-size: 11px; }
.sel { width: 59px; height: 22px; padding: 0 3px 0 6px; display: flex; align-items: center; justify-content: space-between; background: #323232; font-size: 12.400px; }
.sel + .sel { width: 114px; margin-left: 5px; padding-left: 5px; }
.gear { margin-left: 5px; }
.lk { margin-left: 12px; color: #aaa; }
.layer-icons { height: 23px; display: flex; align-items: center; padding: 2px 0 0 7px; color: #999; }
.stack { width: 22px; height: 20px; margin-right: 103px; padding: 1px 2px; background: #2a2a2a; }
.layer-icons > svg + svg { margin-left: 6px; }
.fx { width: 15px; margin: 0 55px 0 8px; border-top: 1px solid #aaa; font: bold 14px/13px "Open Sans", sans-serif; letter-spacing: -1px; color: #aaa; }
.layer-icons .bin { margin-left: 6px; }
.transform { height: 142px; display: grid; grid-template-columns: 58px 204px 26px; align-content: start; padding-top: 13px; color: #aaa; }
.anchor { margin: 24px 0 0 18px; }
.fields { display: grid; grid-template: 26px 27px 38px / 31px 71px 33px 71px; align-items: center; margin-top: -1px; padding-left: 1px; color: #777; font-size: 12.400px; }
.fields label { justify-self: end; margin-right: 5px; }
.field { height: 22px; width: 71px; padding: 0 3px 0 6px; display: flex; align-items: center; justify-content: space-between; background: #303030; color: #aaa; font-size: 12.600px; }
.link { margin: 12px 0 0 13px; }
.scale { grid-column: 1 / 4; display: flex; gap: 2px; margin: 1px 0 0 214px; }
.scale-btn, .scale-drop { width: 32px; height: 26px; background: #444; display: flex; align-items: center; justify-content: center; }
.scale-drop { width: 15px; color: #ddd; }

/* status bar */
.statusbar { height: 28px; flex: none; display: flex; align-items: center; padding-left: 8px; border-bottom: 1px solid #222; background: #333; }
.page-no { margin-left: 38px; width: 58px; font-size: 12.500px; color: #ddd; }
.spread-icon { margin-left: 9px; }
.chain-icon { margin-left: 8px; }
.preflight { margin-left: 12px; }
.hint { margin: 0 0 0 20px; font-size: 13.080px; color: #aaa; }
.hint b { color: #f2f2f2; }
.resize { margin: 16px 2px 0 auto; }

.watermark { position: absolute; left: 939px; top: 634px; display: flex; }
.wm-mono { font: 28px "Liberation Serif", serif; fill: #fff; }
.wm-name { width: 136px; margin: 21px 0 0 4px; font: bold 24px/32px "Noto Serif CJK SC", "Noto Sans CJK SC", serif; letter-spacing: 2px; color: #fff; }
.wm-vip { margin-top: 22px; font: 29px/32px "Liberation Serif", serif; letter-spacing: 1px; color: #d9307c; transform: scaleX(.88); transform-origin: left; -webkit-text-stroke: .4px #d9307c; }
```
